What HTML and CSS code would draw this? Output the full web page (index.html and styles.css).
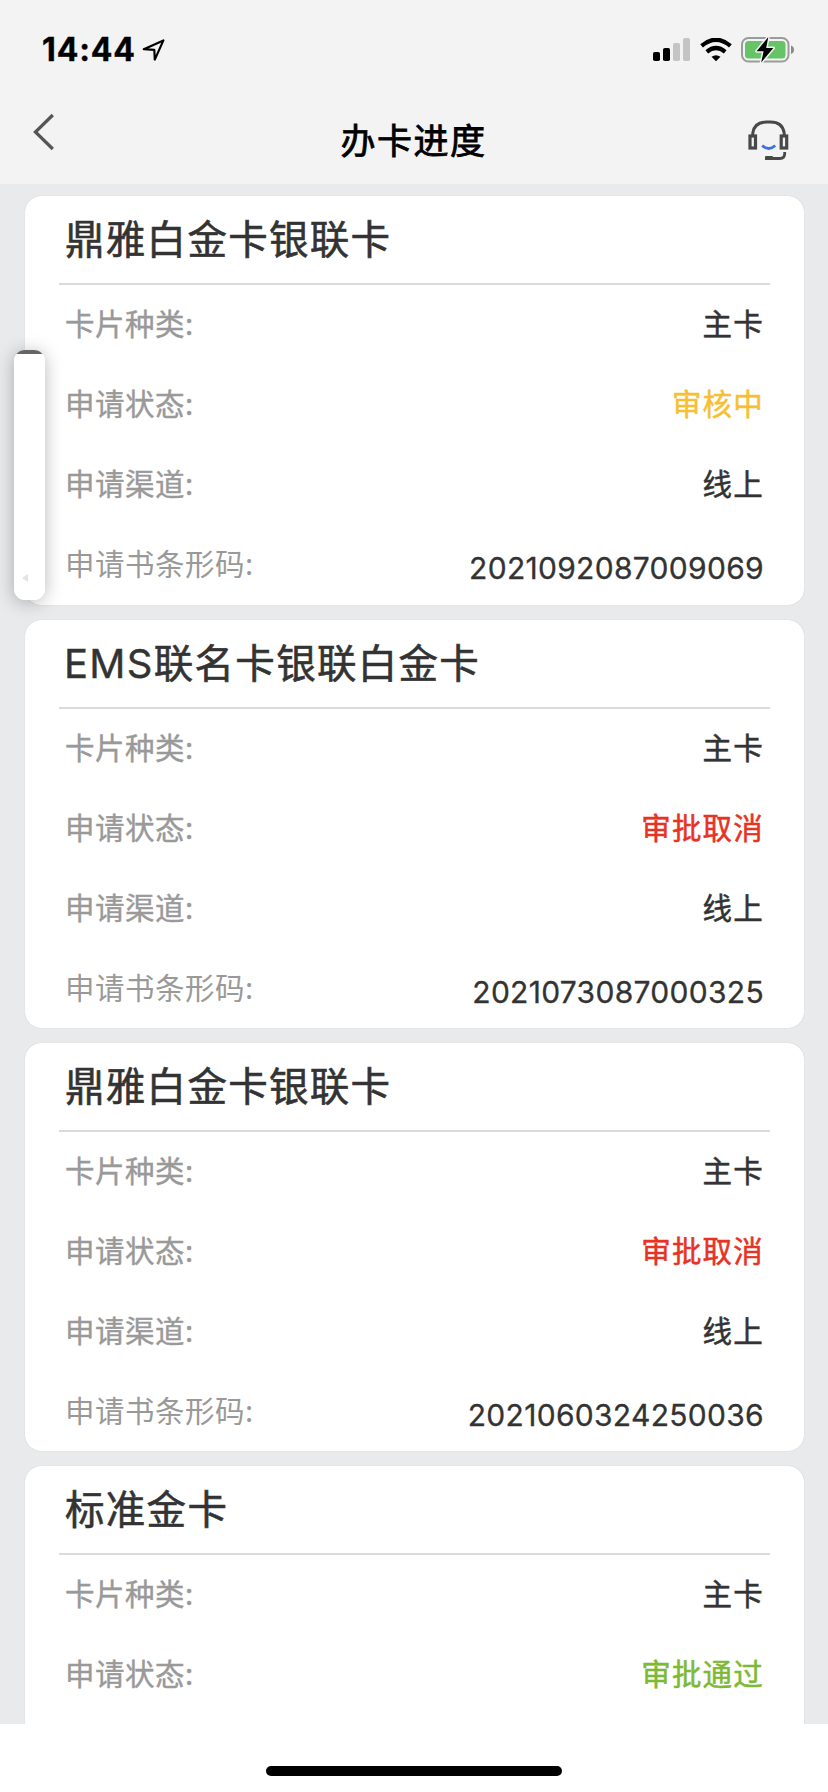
FILE: index.html
```html
<!DOCTYPE html>
<html lang="zh-CN">
<head>
<meta charset="utf-8">
<title>办卡进度</title>
<link rel="stylesheet" href="styles.css">
</head>
<body>
<div class="screen">
  <header class="header">
    <div class="statusbar">
      <span class="clock">14:44</span>
      <svg class="location" width="24" height="24" viewBox="0 0 24 24"><path d="M1.8 11.2 21.4 2.4 12.8 21.6 12.3 11.8Z" fill="none" stroke="#000" stroke-width="2.2" stroke-linejoin="round"/></svg>
      <svg class="signal" width="38" height="24" viewBox="0 0 38 24"><rect y="14" width="7" height="9" rx="1.8"/><rect x="10" y="10" width="7" height="13" rx="1.8"/><rect x="20" y="5" width="7" height="18" rx="1.8" fill="#c4c4c4"/><rect x="30" width="7" height="23" rx="1.8" fill="#c4c4c4"/></svg>
      <svg class="wifi" width="32" height="24" viewBox="0 0 32 24"><path d="M1.6 7.8Q16-4.4 30.4 7.8" fill="none" stroke="#000" stroke-width="4.2"/><path d="M6.8 13.8Q16 6.2 25.2 13.8" fill="none" stroke="#000" stroke-width="4.2"/><path d="M11.5 18.8Q16 15.6 20.5 18.8L16 23.2Z"/></svg>
      <svg class="battery" width="54" height="28" viewBox="0 0 54 28"><rect x="1" y="2" width="46.5" height="23.5" rx="6.5" fill="none" stroke="#9b9b9b" stroke-width="2"/><rect x="4" y="5" width="40.5" height="17.5" rx="3.5" fill="#64c466"/><path d="M50 9.5Q53 10.5 53 13.7T50 18Z" fill="#8b8b8b"/><path d="M27.3 1 15.6 15.2H22.6L20.2 26.5 32.4 12H25.2Z" stroke="#f3f3f3" stroke-width="3" stroke-linejoin="round" paint-order="stroke"/></svg>
    </div>
    <nav class="navbar">
      <svg class="back" width="24" height="40" viewBox="0 0 24 40"><path d="M20.8 3 3.4 20 20.8 37" fill="none" stroke="#555" stroke-width="3.2"/></svg>
      <h1 class="page-title">办卡进度</h1>
      <svg class="service" width="42" height="42" viewBox="0 0 42 42"><path d="M4.8 15V13Q6.5 2 18.5 2H22.5Q34.5 2 36.2 13V15" fill="none" stroke="#484848" stroke-width="3"/><rect x="2" y="16" width="5.5" height="12" fill="none" stroke="#484848" stroke-width="3.2"/><rect x="33.2" y="16" width="5.5" height="12" fill="none" stroke="#484848" stroke-width="3.2"/><path d="M14.2 25.5Q20.8 31.5 27.2 25.5" fill="none" stroke="#4270de" stroke-width="2.8"/><path d="M36.7 32V33.5Q36.7 38.5 32 38.5H17" fill="none" stroke="#484848" stroke-width="2.8"/><rect x="17" y="36" width="8" height="4" rx="1" fill="#484848"/></svg>
    </nav>
  </header>
  <main class="list">
    <section class="card">
      <h2 class="card-title">鼎雅白金卡银联卡</h2>
      <dl class="rows">
        <div class="row"><dt>卡片种类:</dt><dd>主卡</dd></div>
        <div class="row"><dt>申请状态:</dt><dd class="pending">审核中</dd></div>
        <div class="row"><dt>申请渠道:</dt><dd>线上</dd></div>
        <div class="row barcode"><dt>申请书条形码:</dt><dd>2021092087009069</dd></div>
      </dl>
    </section>
    <section class="card">
      <h2 class="card-title"><span class="latin">EMS</span>联名卡银联白金卡</h2>
      <dl class="rows">
        <div class="row"><dt>卡片种类:</dt><dd>主卡</dd></div>
        <div class="row"><dt>申请状态:</dt><dd class="cancelled">审批取消</dd></div>
        <div class="row"><dt>申请渠道:</dt><dd>线上</dd></div>
        <div class="row barcode"><dt>申请书条形码:</dt><dd>2021073087000325</dd></div>
      </dl>
    </section>
    <section class="card">
      <h2 class="card-title">鼎雅白金卡银联卡</h2>
      <dl class="rows">
        <div class="row"><dt>卡片种类:</dt><dd>主卡</dd></div>
        <div class="row"><dt>申请状态:</dt><dd class="cancelled">审批取消</dd></div>
        <div class="row"><dt>申请渠道:</dt><dd>线上</dd></div>
        <div class="row barcode"><dt>申请书条形码:</dt><dd>2021060324250036</dd></div>
      </dl>
    </section>
    <section class="card">
      <h2 class="card-title">标准金卡</h2>
      <dl class="rows">
        <div class="row"><dt>卡片种类:</dt><dd>主卡</dd></div>
        <div class="row"><dt>申请状态:</dt><dd class="approved">审批通过</dd></div>
      </dl>
    </section>
  </main>
  <footer class="footer"><div class="home-indicator"></div></footer>
  <aside class="float-panel"><svg width="6" height="8" viewBox="0 0 6 8"><path d="M0 4 6 0V8Z" fill="#e3e3e3"/></svg></aside>
</div>
</body>
</html>
```
FILE: styles.css
```css
* { box-sizing: border-box; }
body, h1, h2, dl, dt, dd { margin: 0; }
body { font-family: Inter, "Noto Sans CJK SC", sans-serif; background: #fff; }

.screen {
  position: relative;
  width: 828px;
  height: 1792px;
  display: flex;
  flex-direction: column;
  overflow: hidden;
}

.header { height: 184px; background: #f3f3f3; flex: none; }
.statusbar { height: 96px; padding: 36px 33px 0 42px; display: flex; align-items: flex-start; }
.clock { font-size: 32px; line-height: 28px; font-weight: 700; letter-spacing: 0.9px; width: 93px; white-space: nowrap; -webkit-text-stroke: 0.4px #000; }
.location { margin: 2px 0 0 7px; }
.signal { margin: 2px 0 0 auto; }
.wifi { margin: 2px 0 0 9px; }
.battery { margin: 0 0 0 9px; }

.navbar { height: 88px; display: flex; align-items: flex-start; justify-content: space-between; padding: 0 38px 0 32px; }
.back { margin-top: 16px; }
.page-title {
  font-family: "Noto Sans CJK SC", sans-serif;
  font-size: 35px;
  line-height: 50px;
  letter-spacing: 1.5px;
  font-weight: 400;
  margin: 18px 0 0 23px;
  -webkit-text-stroke: 0.8px #000;
}
.service { margin-top: 24px; }

.list {
  height: 1540px;
  flex: none;
  background: #e9eaec;
  padding: 12px 24px 0 25px;
  display: flex;
  flex-direction: column;
  gap: 15px;
  overflow: hidden;
}
.card {
  flex: none;
  height: 408px;
  background: #fff;
  border-radius: 16px;
  box-shadow: 0 0 1px rgba(0, 0, 0, .22);
  padding: 0 34px;
}
.card:first-child { height: 409px; }
.card-title {
  height: 89px;
  padding-left: 6px;
  border-bottom: 2px solid #dadbdc;
  font: 400 39.5px/81px "Noto Sans CJK SC", sans-serif;
  letter-spacing: 1.3px;
  color: #333;
  -webkit-text-stroke: 0.6px #333;
}
.latin { font-family: Inter, sans-serif; font-size: 40px; letter-spacing: 1.3px; margin-left: -1px; -webkit-text-stroke: 0.4px #333; }

.row { height: 80px; display: flex; justify-content: space-between; line-height: 74px; padding: 0 6px; }
dt {
  font-family: "Noto Sans CJK SC", sans-serif;
  font-size: 29.5px;
  letter-spacing: 0.5px;
  color: #999;
  -webkit-text-stroke: 0.4px #999;
}
dd {
  font-family: "Noto Sans CJK SC", sans-serif;
  font-size: 29.5px;
  letter-spacing: 1.2px;
  color: #333;
  -webkit-text-stroke: 0.5px currentColor;
}
.barcode dt { -webkit-text-stroke: 0; }
.barcode dd { font: 400 30px/87px Inter, sans-serif; letter-spacing: 0.3px; -webkit-text-stroke: 0.3px #333; }
.pending { color: #f6c032; }
.cancelled { color: #e73323; }
.approved { color: #7eb935; }

.footer { flex: 1; display: flex; justify-content: center; padding-top: 42px; }
.home-indicator { width: 296px; height: 10px; border-radius: 5px; background: #000; }

.float-panel {
  position: absolute;
  left: 14px;
  top: 350px;
  width: 31px;
  height: 250px;
  border-radius: 11px;
  background: linear-gradient(#666 4px, #fff 4px);
  box-shadow: 0 2px 18px rgba(0, 0, 0, .28);
  padding: 224px 0 0 8px;
  display: flex;
}
```
